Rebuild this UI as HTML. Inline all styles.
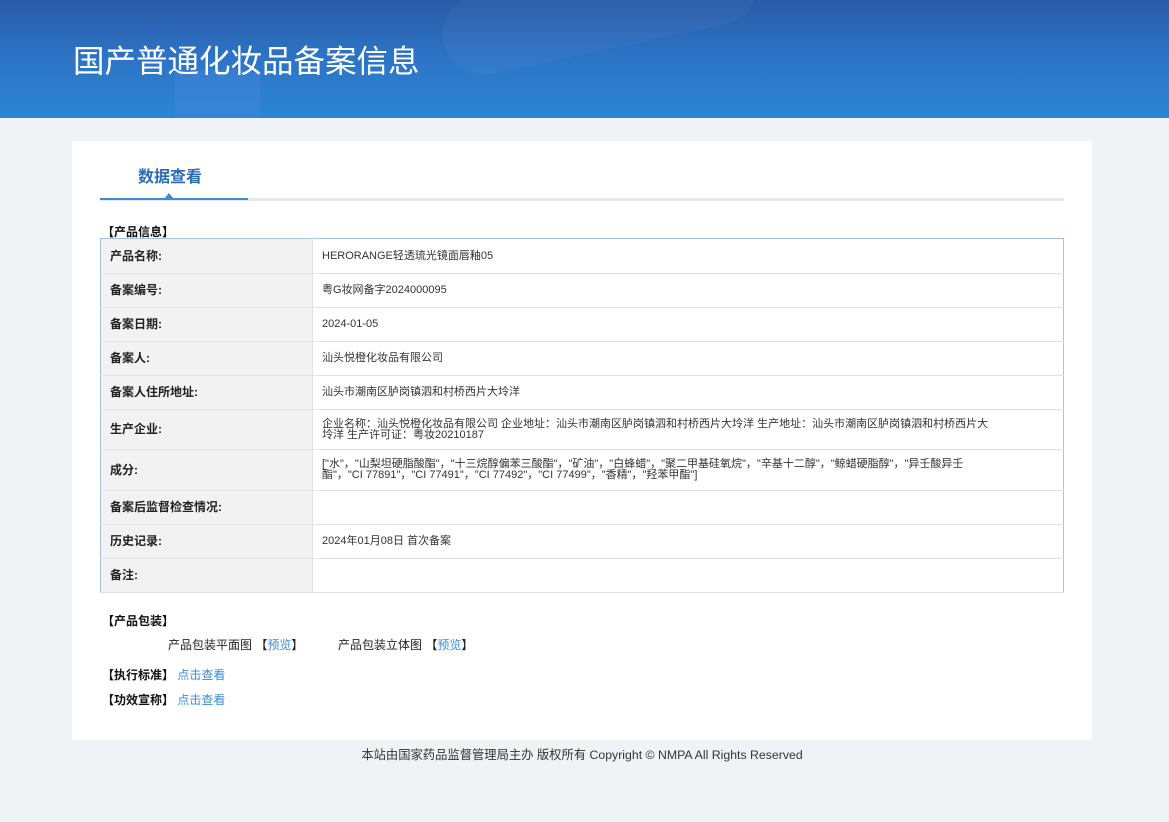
<!DOCTYPE html>
<html><head><meta charset="utf-8"><style>
*{margin:0;padding:0;box-sizing:border-box}
body{width:1169px;height:822px;background:#f0f3f6;font-family:"Liberation Sans","Noto Sans CJK SC",sans-serif;font-size:11px;color:#333;position:relative;overflow:hidden}
.hd{position:absolute;left:0;top:0;width:1169px;height:118px;background:linear-gradient(180deg,#2a5ba6 0%,#2d74c6 50%,#2a86d4 100%);overflow:hidden}
.hd h1{position:absolute;left:73px;top:36px;font-size:31.5px;font-weight:normal;color:#fff;letter-spacing:0px}
.card{position:absolute;left:72px;top:141px;width:1020px;height:599px;background:#fff}
.tab{position:absolute;left:66px;top:22px;font-size:16px;color:#2a6cb5;font-weight:bold}
.tabline{position:absolute;left:28px;top:57px;width:964px;height:3px;background:#e8e8e8}
.tabact{position:absolute;left:28px;top:57px;width:148px;height:2px;background:#3a8bd8}
.tri{position:absolute;left:92px;top:52px;width:0;height:0;border-left:5px solid transparent;border-right:5px solid transparent;border-bottom:6px solid #3a8bd8}
.sec{position:absolute;font-weight:bold;font-size:12px;color:#111}
table{position:absolute;left:28px;top:97px;width:964px;border-collapse:collapse;border:1px solid #a6c0e6}
td{border-bottom:1px solid #e2e2e2;padding:0 9px;font-size:11px;line-height:11px;color:#333}
td.l{width:212px;background:#f2f2f2;font-weight:bold;font-size:12px;color:#222;border-right:1px solid #e2e2e2}
a{color:#3a8bd8;text-decoration:none}
.t{position:absolute;font-size:12px;color:#222}
.ft{position:absolute;top:745px;left:0;width:1164px;text-align:center;font-size:12.3px;color:#333}
</style></head><body>
<div class="hd">
<div style="position:absolute;left:175px;top:70px;width:85px;height:60px;background:rgba(80,140,230,.3)"></div>
<div style="position:absolute;left:440px;top:-30px;width:320px;height:80px;border-radius:40px;background:rgba(255,255,255,.03);transform:rotate(-12deg)"></div>
<h1>国产普通化妆品备案信息</h1>
</div>
<div class="card">
<div class="tab">数据查看</div>
<div class="tabline"></div><div class="tabact"></div><div class="tri"></div>
<div class="sec" style="left:30px;top:82px">【产品信息】</div>
<table>
<tr style="height:35px"><td class="l">产品名称:</td><td>HERORANGE轻透琉光镜面唇釉05</td></tr>
<tr style="height:34px"><td class="l">备案编号:</td><td>粤G妆网备字2024000095</td></tr>
<tr style="height:34px"><td class="l">备案日期:</td><td>2024-01-05</td></tr>
<tr style="height:34px"><td class="l">备案人:</td><td>汕头悦橙化妆品有限公司</td></tr>
<tr style="height:34px"><td class="l">备案人住所地址:</td><td>汕头市潮南区胪岗镇泗和村桥西片大坽洋</td></tr>
<tr style="height:40px"><td class="l">生产企业:</td><td>企业名称：汕头悦橙化妆品有限公司 企业地址：汕头市潮南区胪岗镇泗和村桥西片大坽洋 生产地址：汕头市潮南区胪岗镇泗和村桥西片大<br>坽洋 生产许可证：粤妆20210187</td></tr>
<tr style="height:41px"><td class="l">成分:</td><td>["水"，"山梨坦硬脂酸酯"，"十三烷醇偏苯三酸酯"，"矿油"，"白蜂蜡"，"聚二甲基硅氧烷"，"辛基十二醇"，"鲸蜡硬脂醇"，"异壬酸异壬<br>酯"，"CI 77891"，"CI 77491"，"CI 77492"，"CI 77499"，"香精"，"羟苯甲酯"]</td></tr>
<tr style="height:34px"><td class="l">备案后监督检查情况:</td><td></td></tr>
<tr style="height:34px"><td class="l">历史记录:</td><td>2024年01月08日 首次备案</td></tr>
<tr style="height:34px"><td class="l">备注:</td><td></td></tr>
</table>
<div class="sec" style="left:30px;top:471px">【产品包装】</div>
<div class="t" style="left:96px;top:495px">产品包装平面图 【<a>预览</a>】</div>
<div class="t" style="left:266px;top:495px">产品包装立体图 【<a>预览</a>】</div>
<div class="sec" style="left:30px;top:525px">【执行标准】 <a style="font-weight:normal">点击查看</a></div>
<div class="sec" style="left:30px;top:550px">【功效宣称】 <a style="font-weight:normal">点击查看</a></div>
</div>
<div class="ft">本站由国家药品监督管理局主办 版权所有 Copyright © NMPA All Rights Reserved</div>
</body></html>
